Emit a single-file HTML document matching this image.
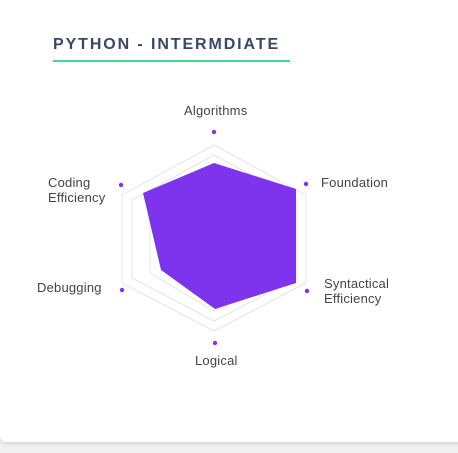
<!DOCTYPE html>
<html><head><style>
html,body{margin:0;padding:0;width:458px;height:453px;overflow:hidden;background:#f1f1f1;font-family:"Liberation Sans",sans-serif}
.card{position:absolute;left:0;top:0;width:470px;height:442px;background:#fff;border-radius:0 0 6px 6px;box-shadow:0 2px 4px rgba(0,0,0,.12)}
.title{position:absolute;left:53px;top:36px;font-size:16px;font-weight:bold;color:#3b4766;letter-spacing:1.9px}
.line{position:absolute;left:53px;top:60px;width:237px;height:2px;background:#3ddc97}
.l{position:absolute;font-size:13px;color:#444;line-height:15px;letter-spacing:0.2px}
</style></head><body>
<div class="card">
<div class="title">PYTHON - INTERMDIATE</div>
<div class="line"></div>
<svg width="458" height="453" style="position:absolute;left:0;top:0">
<g fill="none" stroke="#e4e4e4" stroke-width="1">
<polygon points="214,145 306,195 306,283 214,331 122,283 122,195"/>
<polygon points="214,155 297,200 297,278 214,321 132,278 132,200"/>
<polygon points="214,165 279,204 279,273 214,311 150,273 150,204"/>
</g>
<polygon points="214,163 296,189 296,283 215,309 161,270 143,193" fill="#7e34ed"/>
<g fill="#7e34ed">
<circle cx="214" cy="132" r="2.2"/><circle cx="306" cy="184" r="2.2"/><circle cx="307" cy="291" r="2.2"/>
<circle cx="215" cy="343" r="2.2"/><circle cx="122" cy="290" r="2.2"/><circle cx="121" cy="185" r="2.2"/>
</g>
</svg>
<div class="l" style="left:184px;top:103px">Algorithms</div>
<div class="l" style="left:321px;top:175px">Foundation</div>
<div class="l" style="left:324px;top:276px">Syntactical<br>Efficiency</div>
<div class="l" style="left:195px;top:353px">Logical</div>
<div class="l" style="left:37px;top:280px">Debugging</div>
<div class="l" style="left:48px;top:175px">Coding<br>Efficiency</div>
</div>
</body></html>
